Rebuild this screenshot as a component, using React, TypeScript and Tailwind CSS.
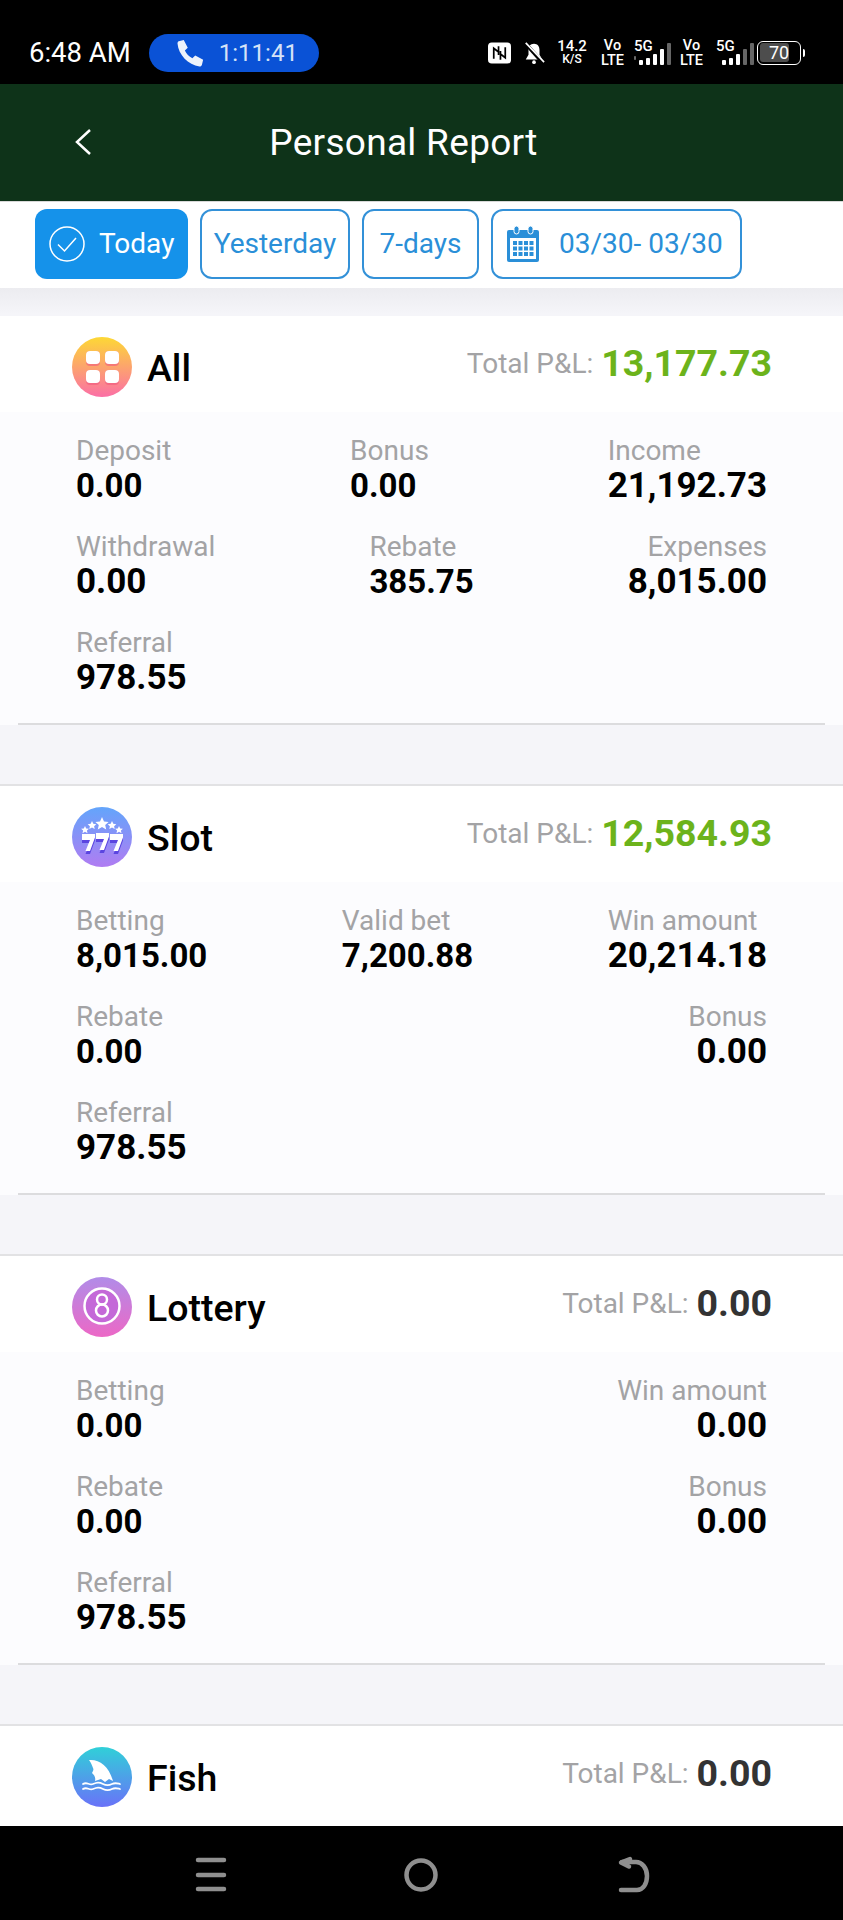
import { ReactNode } from "react";

type Stat = { label: string; value: string; big?: boolean };

type Section = {
  name: string;
  total: string;
  icon: ReactNode;
  rows: Stat[][];
};

function AllIcon() {
  return (
    <svg viewBox="0 0 60 60" className="h-[60px] w-[60px] shrink-0">
      <defs>
        <linearGradient id="allG" x1="0" y1="0" x2="0" y2="1">
          <stop offset="0" stopColor="#fdd835" />
          <stop offset="1" stopColor="#fb6fa6" />
        </linearGradient>
      </defs>
      <circle cx="30" cy="30" r="30" fill="url(#allG)" />
      <rect x="14" y="14" width="14" height="15" rx="4" fill="#f0587e" opacity="0.6" />
      <rect x="33" y="14" width="14" height="15" rx="4" fill="#f0587e" opacity="0.6" />
      <rect x="14" y="33" width="14" height="15" rx="4" fill="#f0587e" opacity="0.6" />
      <rect x="33" y="33" width="14" height="15" rx="4" fill="#f0587e" opacity="0.6" />
      <rect x="14" y="14" width="14" height="13" rx="4" fill="#fff" />
      <rect x="33" y="14" width="14" height="13" rx="4" fill="#fff" />
      <rect x="14" y="33" width="14" height="13" rx="4" fill="#fff" />
      <rect x="33" y="33" width="14" height="13" rx="4" fill="#fff" />
    </svg>
  );
}

function SlotIcon() {
  const seven = "M0 0h13v3.500l-5 13.500H3.500l4.500-11H0z";
  return (
    <svg viewBox="0 0 60 60" className="h-[60px] w-[60px] shrink-0">
      <defs>
        <linearGradient id="slotG" x1="0" y1="0" x2="0" y2="1">
          <stop offset="0" stopColor="#63a5fb" />
          <stop offset="1" stopColor="#b07cf2" />
        </linearGradient>
      </defs>
      <circle cx="30" cy="30" r="30" fill="url(#slotG)" />
      <g fill="#5b45e0" transform="translate(0 3)">
        <path d={seven} transform="translate(10 27)" />
        <path d={seven} transform="translate(24 26)" />
        <path d={seven} transform="translate(38 27)" />
      </g>
      <g fill="#fff">
        <path d={seven} transform="translate(10 27)" />
        <path d={seven} transform="translate(24 26)" />
        <path d={seven} transform="translate(38 27)" />
        <path d="M30 10l2 4.400 4.600.5-3.400 3 1 4.600-4.200-2.400-4.200 2.400 1-4.600-3.400-3 4.600-.5z" />
        <path d="M20 14l1.300 2.800 3 .4-2.200 2 .6 2.900-2.700-1.600-2.700 1.600.6-2.900-2.200-2 3-.4z" />
        <path d="M40 14l1.300 2.800 3 .4-2.200 2 .6 2.900-2.700-1.600-2.700 1.600.6-2.900-2.200-2 3-.4z" />
        <path d="M13 19l1.200 2.500 2.700.3-2 1.800.6 2.600-2.500-1.400-2.500 1.400.6-2.600-2-1.800 2.700-.3z" />
        <path d="M47 19l1.200 2.500 2.700.3-2 1.800.6 2.600-2.500-1.400-2.500 1.400.6-2.600-2-1.800 2.700-.3z" />
      </g>
    </svg>
  );
}

function LotteryIcon() {
  return (
    <svg viewBox="0 0 60 60" className="h-[60px] w-[60px] shrink-0">
      <defs>
        <linearGradient id="lotG" x1="0" y1="0" x2="0" y2="1">
          <stop offset="0" stopColor="#b18ce8" />
          <stop offset="1" stopColor="#ec68c6" />
        </linearGradient>
      </defs>
      <circle cx="30" cy="30" r="30" fill="url(#lotG)" />
      <circle cx="30" cy="29" r="17.500" fill="#c468d8" stroke="#fff" strokeWidth="2.500" />
      <circle cx="30" cy="22.500" r="5" fill="none" stroke="#fff" strokeWidth="2.500" />
      <circle cx="30" cy="33.500" r="6" fill="none" stroke="#fff" strokeWidth="2.500" />
    </svg>
  );
}

function FishIcon() {
  return (
    <svg viewBox="0 0 60 60" className="h-[60px] w-[60px] shrink-0">
      <defs>
        <linearGradient id="fishG" x1="0" y1="0" x2="0" y2="1">
          <stop offset="0" stopColor="#30d0d8" />
          <stop offset="1" stopColor="#6a72f8" />
        </linearGradient>
      </defs>
      <circle cx="30" cy="30" r="30" fill="url(#fishG)" />
      <path
        d="M17 13c10-1 20 6 24 21l-4-2-4 3-4-3-6 2c1-4-1-6-3-8 1-2 2-3 1-5-1-3-2-5-4-8z"
        fill="#fff"
      />
      <g fill="none" stroke="#fff" strokeWidth="1.800" strokeLinecap="round">
        <path d="M11 37c4-2.500 6 1.500 10 0s6-2 10 0 6 1.500 9 0 4-1 8 0" />
        <path d="M11 42c4-2.500 6 1.500 10 0s6-2 10 0 6 1.500 9 0 4-1 8 0" />
      </g>
    </svg>
  );
}

const sections: Section[] = [
  {
    name: "All",
    total: "13,177.73",
    icon: <AllIcon />,
    rows: [
      [
        { label: "Deposit", value: "0.00" },
        { label: "Bonus", value: "0.00" },
        { label: "Income", value: "21,192.73" },
      ],
      [
        { label: "Withdrawal", value: "0.00", big: true },
        { label: "Rebate", value: "385.75" },
        { label: "Expenses", value: "8,015.00" },
      ],
      [{ label: "Referral", value: "978.55" }],
    ],
  },
  {
    name: "Slot",
    total: "12,584.93",
    icon: <SlotIcon />,
    rows: [
      [
        { label: "Betting", value: "8,015.00" },
        { label: "Valid bet", value: "7,200.88" },
        { label: "Win amount", value: "20,214.18" },
      ],
      [
        { label: "Rebate", value: "0.00" },
        { label: "Bonus", value: "0.00" },
      ],
      [{ label: "Referral", value: "978.55" }],
    ],
  },
  {
    name: "Lottery",
    total: "0.00",
    icon: <LotteryIcon />,
    rows: [
      [
        { label: "Betting", value: "0.00" },
        { label: "Win amount", value: "0.00" },
      ],
      [
        { label: "Rebate", value: "0.00" },
        { label: "Bonus", value: "0.00" },
      ],
      [{ label: "Referral", value: "978.55" }],
    ],
  },
  {
    name: "Fish",
    total: "0.00",
    icon: <FishIcon />,
    rows: [],
  },
];

function Signal({ lit, arrows }: { lit: number; arrows?: boolean }) {
  const heights = [5, 7, 11, 16, 22];
  return (
    <div className="relative flex h-[24px] items-end gap-[3px]">
      <span className="absolute -top-[2px] left-0 text-[15px] font-medium leading-none">5G</span>
      {arrows && (
        <svg viewBox="0 0 6 12" className="mb-[1px] h-[12px] w-[5px]" fill="#fff">
          <path d="M3 0l3 4.500H0zM3 12l3-4.500H0z" />
        </svg>
      )}
      <div className={`flex items-end gap-[3px] ${arrows ? "" : "ml-[6px]"}`}>
        {heights.map((h, i) => (
          <div
            key={i}
            className={`w-[4px] rounded-[1px] ${i < lit ? "bg-white" : "bg-[#666]"}`}
            style={{ height: h }}
          />
        ))}
      </div>
    </div>
  );
}

function VoLte({ className }: { className: string }) {
  return (
    <div className={`flex w-[23px] flex-col items-center text-[14.500px] font-medium leading-[15px] ${className}`}>
      <span>Vo</span>
      <span>LTE</span>
    </div>
  );
}

function StatusBar() {
  return (
    <div className="flex h-[84px] shrink-0 items-center bg-black pl-[29px] pr-[38px] pt-[21px] text-white">
      <span className="text-[27.500px] leading-none">6:48 AM</span>
      <div className="ml-[18px] flex h-[38px] w-[170px] items-center rounded-full bg-[#0a52d6] pl-[26px]">
        <svg viewBox="0 0 24 24" className="h-[30px] w-[30px]" fill="#eef3fb">
          <path d="M3 2.500 7 1.500l3.200 6.300-2.300 2.200c1 2.500 3.400 5 6 6.200l2.300-2.200 6.300 3.300-1 4.200c-.3.800-1 1.300-1.900 1.200C10.500 21.500 2.800 13.500 2 4.400c0-.9.300-1.600 1-1.900z" />
        </svg>
        <span className="ml-[14px] text-[24px] leading-none text-[#d5e2f7]">1:11:41</span>
      </div>

      <div className="ml-auto flex items-center">
        <svg viewBox="0 0 24 22" className="h-[22px] w-[23px]">
          <rect width="24" height="22" rx="4" fill="#fff" />
          <path d="M6 17V6l5 4M18 5v11l-5-4M11 4v9M13 9v9" fill="none" stroke="#000" strokeWidth="1.800" />
        </svg>
        <svg viewBox="0 0 24 24" className="ml-[12px] h-[26px] w-[22px]" fill="#fff">
          <path d="M12 2c4 0 6 3 6 7v5l3 5H3l3-5V9c0-4 2-7 6-7z" />
          <circle cx="12" cy="22" r="2" />
          <path d="M3 2l18 20" stroke="#000" strokeWidth="4" />
          <path d="M3 1l20 21" stroke="#fff" strokeWidth="1.800" />
        </svg>
        <div className="ml-[12px] flex w-[30px] flex-col items-center text-[15px] font-medium leading-[13px]">
          <span>14.2</span>
          <span className="text-[12px]">K/S</span>
        </div>
        <VoLte className="ml-[14px]" />
        <div className="ml-[10px] w-[37px]">
          <Signal lit={4} arrows />
        </div>
        <VoLte className="ml-[9px]" />
        <div className="ml-[13px] w-[35px]">
          <Signal lit={3} />
        </div>
        <div className="relative ml-[6px] flex h-[24px] w-[44px] items-center justify-center overflow-hidden rounded-[6px] border-[1.500px] border-white">
          <div className="absolute inset-y-[1.500px] left-[1.500px] w-[29px] rounded-[3px] bg-[#4d4d4d]" />
          <span className="relative text-[18px] leading-none">70</span>
        </div>
        <div className="ml-[2px] h-[8px] w-[2px] rounded-r-[2px] bg-white" />
      </div>
    </div>
  );
}

function TopBar() {
  return (
    <div className="relative flex h-[117px] shrink-0 items-center justify-center bg-[#0e3319] text-white">
      <button type="button" className="absolute left-[74px] top-[44px]">
        <svg viewBox="0 0 18 28" className="h-[28px] w-[18px]" fill="none" stroke="#fff" strokeWidth="2.500">
          <path d="M16 2 3 14l13 12" />
        </svg>
      </button>
      <h1 className="mr-[36px] text-[37px] font-normal leading-none tracking-[0.3px]">Personal Report</h1>
    </div>
  );
}

function Filters() {
  const plain = "flex h-[70px] items-center justify-center rounded-[12px] border-2 border-[#3391d8] text-[28px] text-[#2a8fd8]";
  return (
    <div className="relative z-10 flex h-[87px] shrink-0 gap-[12px] border-t border-[#d8d8d8] bg-white pl-[35px] pt-[7px]">
      <button type="button" className="flex h-[70px] w-[153px] items-center rounded-[12px] bg-[#1592ea] pb-[1px] pl-[14px] text-[28px] text-white">
        <svg viewBox="0 0 36 36" className="h-[36px] w-[36px]" fill="none" stroke="#fff" strokeWidth="1.500">
          <circle cx="18" cy="18" r="17" />
          <path d="M9 18.500 15.500 25 27 12" />
        </svg>
        <span className="ml-[14px]">Today</span>
      </button>
      <button type="button" className={`${plain} w-[150px]`}>Yesterday</button>
      <button type="button" className={`${plain} w-[117px]`}>7-days</button>
      <button type="button" className="flex h-[70px] w-[251px] items-center rounded-[12px] border-2 border-[#3391d8] pl-[14px] text-[28px] text-[#2a8fd8]">
        <svg viewBox="0 0 32 36" className="h-[36px] w-[32px]" fill="#2a8fd8">
          <path d="M2 4h28a2 2 0 0 1 2 2v28a2 2 0 0 1-2 2H2a2 2 0 0 1-2-2V6a2 2 0 0 1 2-2z" />
          <rect x="3" y="12" width="26" height="21" fill="#fff" />
          <rect x="7" y="0" width="5" height="8" rx="2.500" fill="#2a8fd8" stroke="#fff" />
          <rect x="21" y="0" width="5" height="8" rx="2.500" fill="#2a8fd8" stroke="#fff" />
          <path d="M6 15h4v4H6zm5.500 0h4v4h-4zm5.500 0h4v4h-4zm5.500 0h4v4h-4zM6 20.500h4v4H6zm5.500 0h4v4h-4zm5.500 0h4v4h-4zm5.500 0h4v4h-4zM6 26h4v4H6zm5.500 0h4v4h-4zm5.500 0h4v4h-4zm5.500 0h4v4h-4z" />
        </svg>
        <span className="ml-[20px]">03/30- 03/30</span>
      </button>
    </div>
  );
}

function ReportCard({ section }: { section: Section }) {
  const green = section.total !== "0.00";
  const empty = section.rows.length === 0;
  return (
    <section className={`mb-[59px] border-t-2 border-[#e2e2e4] first-of-type:border-t-[#f5f5f9] ${empty ? "h-[200px] bg-white" : "bg-[#fcfcfe]"}`}>
      <div className="flex h-[96px] items-center bg-white pl-[72px] pr-[71px] pt-[6px]">
        {section.icon}
        <span className="ml-[15px] mt-[4px] text-[37.500px] font-medium leading-none text-black">{section.name}</span>
        <div className="mb-[6px] ml-auto flex items-center">
          <span className="text-[28px] leading-none text-[#a3a3a5]">Total P&amp;L:</span>
          <span className={`ml-[8px] text-[37.500px] font-bold leading-none ${green ? "text-[#6cb31b]" : "text-[#333]"}`}>
            {section.total}
          </span>
        </div>
      </div>
      {!empty && (
        <div className="mx-[18px] flex h-[313px] flex-col border-b-2 border-[#dcdcde] px-[58px] pt-[23px]">
          {section.rows.map((row, i) => (
            <div key={i} className="flex h-[96px] justify-between">
              {row.map((stat, j) => {
                const last = j === row.length - 1;
                const right = j > 0 && last && !(i === 0 && row.length === 3);
                return (
                  <div key={stat.label} className={right ? "text-right" : "text-left"}>
                    <div className="text-[28px] leading-[32px] text-[#a3a3a5]">{stat.label}</div>
                    <div className={`font-bold leading-[38px] text-black ${last || stat.big ? "text-[35px]" : "text-[33px]"}`}>
                      {stat.value}
                    </div>
                  </div>
                );
              })}
            </div>
          ))}
        </div>
      )}
    </section>
  );
}

function NavBar() {
  return (
    <div className="h-[94px] shrink-0 bg-black">
      <svg viewBox="0 0 843 94" className="h-[94px] w-[843px]" fill="none" stroke="#8f8f8f" strokeWidth="4.500" strokeLinecap="round">
        <path d="M198 34h26M198 49h26M198 63h26" />
        <circle cx="421" cy="49" r="14.500" />
        <path d="M621 64h16c6 0 10-6 10-14s-5-14-11-14h-14" />
        <path d="M630 33l-9 3.500 8 4" strokeLinejoin="round" />
      </svg>
    </div>
  );
}

export default function App() {
  return (
    <div className="flex h-[1920px] w-[843px] flex-col overflow-hidden bg-[#f5f5f9] font-['Roboto',sans-serif]">
      <StatusBar />
      <TopBar />
      <Filters />
      <div className="min-h-0 flex-1 overflow-hidden">
        <div className="h-[26px] bg-gradient-to-b from-[#ececf0] to-[#f5f5f9]" />
        {sections.map(s => (
          <ReportCard key={s.name} section={s} />
        ))}
      </div>
      <NavBar />
    </div>
  );
}
